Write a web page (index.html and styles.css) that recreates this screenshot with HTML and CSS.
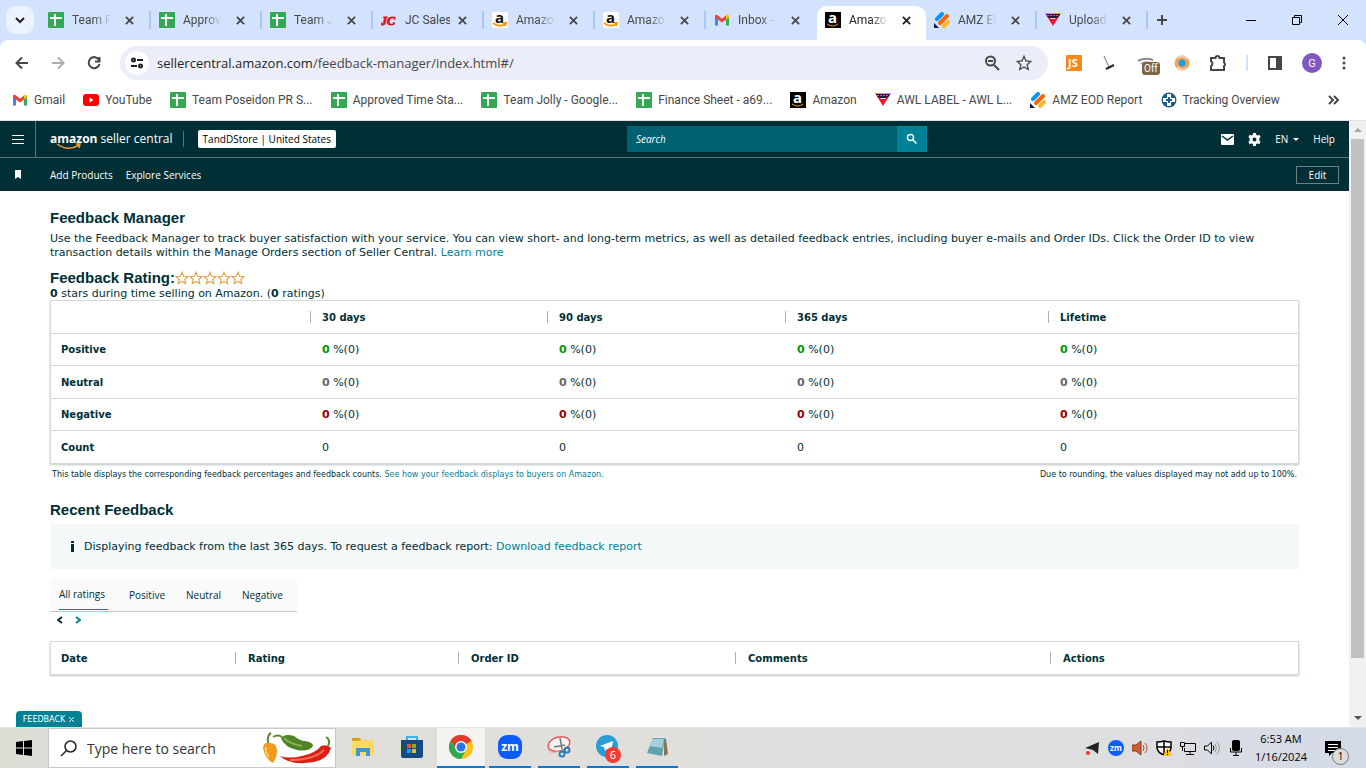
FILE: index.html
```
<!DOCTYPE html>
<html lang="en">
<head>
    <meta charset="UTF-8">
    <meta name="viewport" content="width=device-width, initial-scale=1.0">
    <title>Feedback Manager</title>
    <link rel="stylesheet" href="styles.css">
</head>
<body>

    <!-- shared icons -->
    <svg class="sprite" aria-hidden="true">
        <symbol id="i-sheet" viewBox="0 0 16 16"><rect width="16" height="16" rx="1" fill="#34a853"/><path d="M2 6h12M7 2v12" stroke="#fff" stroke-width="2"/></symbol>
        <symbol id="i-jc" viewBox="0 0 16 16"><text x="0" y="13" font-family="Liberation Serif, serif" font-size="12" font-weight="bold" font-style="italic" fill="#e3141c" stroke="#e3141c">JC</text></symbol>
        <symbol id="i-amz" viewBox="0 0 16 16"><rect width="16" height="16" rx="2" fill="#fff"/><text x="3" y="11" font-family="Open Sans, sans-serif" font-size="15" font-weight="bold" fill="#111">a</text><path d="M1 11q6 5 12 1M11 11h3l-1 3" fill="none" stroke="#ff9900" stroke-width="2"/></symbol>
        <symbol id="i-amzdark" viewBox="0 0 16 16"><rect width="16" height="16" fill="#000"/><text x="3" y="11" font-family="Open Sans, sans-serif" font-size="15" font-weight="bold" fill="#fff">a</text><path d="M2 12q6 4 11 0" fill="none" stroke="#ff9900"/></symbol>
        <symbol id="i-gmail" viewBox="0 0 16 16"><path d="M1 4v9.500h3V7z" fill="#4285f4"/><path d="M15 4v9.500h-3V7z" fill="#34a853"/><path d="M1 3.500Q2 2 4 3.500l4 3.200 4-3.200v4L8 10.500 4 7.500 1 5.200z" fill="#ea4335"/><path d="M12 3.500q2-1.500 3 0v2L12 7.600z" fill="#fbbc04"/></symbol>
        <symbol id="i-youtube" viewBox="0 0 16 16"><rect y="2" width="16" height="12" rx="3" fill="#f00"/><path d="M6.500 5.500v5l4-2.500z" fill="#fff"/></symbol>
        <symbol id="i-awl" viewBox="0 0 16 16"><path d="M0 1h16l-3 5H3z" fill="#2b1238"/><path d="M2 3.500h12" stroke="#e24a9b" stroke-dasharray="2 1"/><path d="M0 1.500h16" stroke="#d7a928"/><path d="M3 6l1-1 2 2h4l2-2 1 1-5 8z" fill="#f0142c"/></symbol>
        <symbol id="i-eod" viewBox="0 0 16 16"><g stroke-linecap="round" stroke-width="4"><path d="M3 7l5-5" stroke="#0099ff"/><path d="M6 11l7-7" stroke="#ff6100"/><path d="M10 14l4-4" stroke="#ffb629"/></g><path d="M0 11l5 5H0z" fill="#0a1551"/></symbol>
        <symbol id="i-track" viewBox="0 0 16 16"><circle cx="8" cy="8" r="7.500" fill="#1d5c85"/><path d="M6 2h4v4h4v4h-4v4H6v-4H2V6h4z" fill="#fff"/><path d="M8 5v6M5 8h6" stroke="#1d5c85" stroke-width="2"/></symbol>
        <symbol id="i-x" viewBox="0 0 10 10"><path d="M1 1l8 8M9 1L1 9" stroke="currentColor" stroke-width="2" fill="none"/></symbol>
        <symbol id="i-star" viewBox="0 0 24 24"><path d="M12 2l3 7 7 .7-5.300 4.800 1.600 7.200L12 17.900l-6.300 3.800 1.600-7.200L2 9.700 9 9z" fill="none" stroke="currentColor" stroke-width="2"/></symbol>
        <symbol id="i-search" viewBox="0 0 16 16"><circle cx="6" cy="6" r="4" fill="none" stroke="currentColor" stroke-width="2"/><path d="M9 9l5 5" stroke="currentColor" stroke-width="2"/></symbol>
    </svg>

    <div class="browser">
        <div class="tab-strip">
            <button class="tab-list" aria-label="Search tabs"><svg width="10" height="10" viewBox="0 0 10 10"><path d="M1 3l4 4 4-4" fill="none" stroke="#1f1f1f" stroke-width="2"/></svg></button>
            <div class="tabs">
                <div class="tab"><svg class="fav"><use href="#i-sheet"/></svg><a href="#">Team Poseidon</a><button aria-label="Close"><svg><use href="#i-x"/></svg></button></div>
                <div class="tab"><svg class="fav"><use href="#i-sheet"/></svg><a href="#">Approved</a><button aria-label="Close"><svg><use href="#i-x"/></svg></button></div>
                <div class="tab"><svg class="fav"><use href="#i-sheet"/></svg><a href="#">Team Jolly</a><button aria-label="Close"><svg><use href="#i-x"/></svg></button></div>
                <div class="tab full"><svg class="fav"><use href="#i-jc"/></svg><a href="#">JC Sales</a><button aria-label="Close"><svg><use href="#i-x"/></svg></button></div>
                <div class="tab"><svg class="fav"><use href="#i-amz"/></svg><a href="#">Amazon</a><button aria-label="Close"><svg><use href="#i-x"/></svg></button></div>
                <div class="tab"><svg class="fav"><use href="#i-amz"/></svg><a href="#">Amazon</a><button aria-label="Close"><svg><use href="#i-x"/></svg></button></div>
                <div class="tab last"><svg class="fav"><use href="#i-gmail"/></svg><a href="#">Inbox -</a><button aria-label="Close"><svg><use href="#i-x"/></svg></button></div>
                <div class="tab active"><svg class="fav"><use href="#i-amzdark"/></svg><a href="#">Amazon</a><button aria-label="Close"><svg><use href="#i-x"/></svg></button></div>
                <div class="tab"><svg class="fav"><use href="#i-eod"/></svg><a href="#">AMZ EOD</a><button aria-label="Close"><svg><use href="#i-x"/></svg></button></div>
                <div class="tab"><svg class="fav"><use href="#i-awl"/></svg><a href="#">Upload</a><button aria-label="Close"><svg><use href="#i-x"/></svg></button></div>
            </div>
            <button class="new-tab" aria-label="New tab"><svg width="12" height="12" viewBox="0 0 12 12"><path d="M6 1v10M1 6h10" stroke="#474747" stroke-width="2"/></svg></button>
            <div class="window-buttons">
                <button aria-label="Minimize"><svg width="12" height="12" viewBox="0 0 12 12"><path d="M1 6.500h10" stroke="#000"/></svg></button>
                <button aria-label="Restore"><svg width="12" height="12" viewBox="0 0 12 12"><path d="M1.500 3.500h7v7h-7zM3.500 3V1.500h7v7H9" fill="none" stroke="#000"/></svg></button>
                <button aria-label="Close window"><svg width="12" height="12" viewBox="0 0 12 12"><path d="M1 1l10 10M11 1L1 11" stroke="#000"/></svg></button>
            </div>
        </div>

        <div class="toolbar">
            <div class="nav-buttons">
                <button aria-label="Back"><svg width="16" height="16" viewBox="0 0 16 16"><path d="M14 8H3M8 2.500L2.500 8 8 13.500" fill="none" stroke="#474747" stroke-width="2"/></svg></button>
                <button aria-label="Forward" disabled><svg width="16" height="16" viewBox="0 0 16 16"><path d="M2 8h11M8 2.500l5.500 5.500L8 13.500" fill="none" stroke="#acacac" stroke-width="2"/></svg></button>
                <button aria-label="Reload"><svg width="16" height="16" viewBox="0 0 16 16"><path d="M13 5a5.500 5.500 0 1 0 .5 4M13.500 2v4.500H9" fill="none" stroke="#474747" stroke-width="2"/></svg></button>
            </div>
            <div class="omnibox">
                <span class="site-info"><svg width="14" height="14" viewBox="0 0 14 14"><g fill="none" stroke="#1f1f1f" stroke-width="2"><circle cx="3.500" cy="4" r="1.500"/><path d="M7 4h6M1 10h6"/><circle cx="10.500" cy="10" r="1.500"/></g></svg></span>
                <a class="url" href="#"><b>sellercentral.amazon.com</b>/feedback-manager/index.html#/</a>
                <button aria-label="Zoom"><svg width="16" height="16" viewBox="0 0 16 16"><path d="M10 10l5 5M4 6h5" stroke="#474747" stroke-width="2"/><circle cx="6.500" cy="6" r="4.500" fill="none" stroke="#474747" stroke-width="2"/></svg></button>
                <button aria-label="Bookmark"><svg class="bookmark-star"><use href="#i-star"/></svg></button>
            </div>
            <div class="extensions">
                <button aria-label="JS"><svg width="16" height="16"><rect width="16" height="16" rx="1" fill="#f7891a"/><text x="2" y="12" font-family="Open Sans, sans-serif" font-size="11" font-weight="bold" fill="#fff">JS</text></svg></button>
                <button aria-label="Mop"><svg width="16" height="16" viewBox="0 0 16 16"><path d="M2 1l5 11" stroke="#777"/><path d="M4 14l8-4" stroke="#222" stroke-width="2"/></svg></button>
                <button class="off" aria-label="Extension off"><svg width="16" height="16" viewBox="0 0 16 16"><path d="M0 6q7-4 15-1" fill="none" stroke="#888" stroke-width="2"/><path d="M3 9q4-3 10-1" fill="none" stroke="#aaa" stroke-width="2"/></svg><span>Off</span></button>
                <button aria-label="Capture"><svg width="16" height="16" viewBox="0 0 16 16"><circle cx="8" cy="8" r="7.500" fill="#f3a15f"/><path d="M3 3q5-4 10 1M13 13q-5 4-10-1" stroke="#f7d2ae" stroke-width="2" fill="none"/><circle cx="8" cy="8" r="3.500" fill="#1b9fd6"/></svg></button>
                <button aria-label="Extensions"><svg width="16" height="18" viewBox="1 0 16 18"><path d="M2 4h4.500a2 2 0 0 1 4 0H15v4.500a2 2 0 0 1 0 3.500v4H2v-4q3-2 0-5z" fill="none" stroke="#474747" stroke-width="2"/></svg></button>
                <i class="divider"></i>
                <button aria-label="Side panel"><svg width="14" height="14" viewBox="0 0 14 14"><path d="M1 1h12v12H1z" fill="none" stroke="#474747" stroke-width="2"/><path d="M8 1h5v12H8z" fill="#474747"/></svg></button>
                <button class="avatar">G</button>
                <button aria-label="Menu"><svg width="4" height="16" viewBox="0 0 4 16" fill="#474747"><circle cx="2" cy="3" r="1.500"/><circle cx="2" cy="8" r="1.500"/><circle cx="2" cy="13" r="1.500"/></svg></button>
            </div>
        </div>

        <div class="bookmarks">
            <a href="#"><svg class="fav"><use href="#i-gmail"/></svg>Gmail</a>
            <a href="#"><svg class="fav"><use href="#i-youtube"/></svg>YouTube</a>
            <a href="#"><svg class="fav"><use href="#i-sheet"/></svg>Team Poseidon PR S...</a>
            <a href="#"><svg class="fav"><use href="#i-sheet"/></svg>Approved Time Sta...</a>
            <a href="#"><svg class="fav"><use href="#i-sheet"/></svg>Team Jolly - Google...</a>
            <a href="#"><svg class="fav"><use href="#i-sheet"/></svg>Finance Sheet - a69...</a>
            <a href="#"><svg class="fav"><use href="#i-amzdark"/></svg>Amazon</a>
            <a href="#"><svg class="fav"><use href="#i-awl"/></svg>AWL LABEL - AWL L...</a>
            <a href="#"><svg class="fav"><use href="#i-eod"/></svg>AMZ EOD Report</a>
            <a href="#"><svg class="fav"><use href="#i-track"/></svg>Tracking Overview</a>
            <button aria-label="More bookmarks"><svg width="12" height="10" viewBox="0 0 12 10"><path d="M1 1l4 4-4 4M6 1l4 4-4 4" fill="none" stroke="#474747" stroke-width="2"/></svg></button>
        </div>
    </div>

    <div class="viewport">
        <div class="page">
            <header>
                <div class="top-bar">
                    <button class="menu" aria-label="Menu"><svg width="12" height="10" viewBox="0 0 12 10"><path d="M0 1.500h12M0 5.500h12M0 9.500h12" stroke="#fff"/></svg></button>
                    <div class="brand">
                        <a class="logo" href="#"><b>amazon</b> seller central
                            <svg width="26" height="8" viewBox="0 0 26 8"><path d="M1 1q11 8 22 1M20 1h4l-1 4" fill="none" stroke="#f19b2c" stroke-width="1.500"/></svg>
                        </a>
                        <button class="store">TandDStore | United States</button>
                    </div>
                    <form class="search">
                        <input type="text" placeholder="Search" aria-label="Search">
                        <button type="button" aria-label="Go"><svg width="12" height="12" viewBox="0 0 16 16"><use href="#i-search"/></svg></button>
                    </form>
                    <div class="account">
                        <a href="#" aria-label="Messages"><svg width="13" height="11" viewBox="0 0 13 11"><rect width="13" height="11" rx="1" fill="#fff"/><path d="M1 2l5.500 4L12 2" fill="none" stroke="#002f36" stroke-width="1.500"/></svg></a>
                        <a href="#" aria-label="Settings"><svg width="13" height="13" viewBox="0 0 13 13"><circle cx="6.500" cy="6.500" r="3.500" fill="none" stroke="#fff" stroke-width="3"/><path d="M6.500 0v2M6.500 11v2M1 3l2 1M10 9l2 1M1 10l2-1M10 4l2-1" stroke="#fff" stroke-width="3"/></svg></a>
                        <button class="lang">EN <i></i></button>
                        <a href="#">Help</a>
                    </div>
                </div>
                <div class="sub-bar">
                    <svg class="pin" width="6" height="9" viewBox="0 0 6 9"><path d="M0 0h6v9L3 7 0 9z" fill="#fff"/></svg>
                    <nav>
                        <a href="#">Add Products</a>
                        <a href="#">Explore Services</a>
                    </nav>
                    <button class="edit">Edit</button>
                </div>
            </header>

            <main>
                <h1>Feedback Manager</h1>
                <p class="intro">Use the Feedback Manager to track buyer satisfaction with your service. You can view short- and long-term metrics, as well as detailed feedback entries, including buyer e-mails and Order IDs. Click the Order ID to view transaction details within the Manage Orders section of Seller Central. <a href="#">Learn more</a></p>

                <h2 class="rating">Feedback Rating:
                    <span class="stars">
                        <svg><use href="#i-star"/></svg><svg><use href="#i-star"/></svg><svg><use href="#i-star"/></svg><svg><use href="#i-star"/></svg><svg><use href="#i-star"/></svg>
                    </span>
                </h2>
                <p class="summary"><b>0</b> stars during time selling on Amazon. (<b>0</b> ratings)</p>

                <table class="metrics">
                    <colgroup><col class="m-label"><col class="m-30"><col class="m-90"><col class="m-365"><col class="m-life"></colgroup>
                    <thead>
                        <tr><td></td><th>30 days</th><th>90 days</th><th>365 days</th><th>Lifetime</th></tr>
                    </thead>
                    <tbody>
                        <tr class="positive"><th>Positive</th><td><b>0</b> %(0)</td><td><b>0</b> %(0)</td><td><b>0</b> %(0)</td><td><b>0</b> %(0)</td></tr>
                        <tr class="neutral"><th>Neutral</th><td><b>0</b> %(0)</td><td><b>0</b> %(0)</td><td><b>0</b> %(0)</td><td><b>0</b> %(0)</td></tr>
                        <tr class="negative"><th>Negative</th><td><b>0</b> %(0)</td><td><b>0</b> %(0)</td><td><b>0</b> %(0)</td><td><b>0</b> %(0)</td></tr>
                        <tr class="count"><th>Count</th><td>0</td><td>0</td><td>0</td><td>0</td></tr>
                    </tbody>
                </table>
                <div class="footnote">
                    <span>This table displays the corresponding feedback percentages and feedback counts. <a href="#">See how your feedback displays to buyers on Amazon.</a></span>
                    <span>Due to rounding, the values displayed may not add up to 100%.</span>
                </div>

                <h2>Recent Feedback</h2>
                <div class="notice">
                    <svg width="5" height="11" viewBox="0 0 5 11"><path d="M1 0h3v2H1zM1 3h3v8H1z" fill="#002f36"/></svg>
                    <span>Displaying feedback from the last 365 days. To request a feedback report: <a href="#">Download feedback report</a></span>
                </div>

                <div class="filters">
                    <button class="selected">All ratings</button>
                    <button>Positive</button>
                    <button>Neutral</button>
                    <button>Negative</button>
                </div>
                <div class="pager">
                    <button aria-label="Previous"><svg width="6" height="8" viewBox="0 0 6 8"><path d="M5 1L1 4l4 3" fill="none" stroke="#002f36" stroke-width="2"/></svg></button>
                    <button aria-label="Next"><svg width="6" height="8" viewBox="0 0 6 8"><path d="M1 1l4 3-4 3" fill="none" stroke="#008296" stroke-width="2"/></svg></button>
                </div>

                <table class="entries">
                    <colgroup><col class="e-date"><col class="e-rating"><col class="e-order"><col class="e-comments"><col class="e-actions"></colgroup>
                    <thead>
                        <tr><th>Date</th><th>Rating</th><th>Order ID</th><th>Comments</th><th>Actions</th></tr>
                    </thead>
                </table>
            </main>
            <button class="feedback-tab">FEEDBACK <svg width="7" height="7" viewBox="0 0 7 7"><path d="M1 1l5 5M6 1L1 6" stroke="#fff"/></svg></button>
        </div>
        <div class="scrollbar">
            <i class="up"></i>
            <div class="track"><div class="thumb"></div></div>
            <i class="down"></i>
        </div>
    </div>

    <div class="taskbar">
        <button class="start" aria-label="Start"><svg width="16" height="16" viewBox="0 0 16 16"><path d="M0 2l7-1v6.500H0zM8 1l8-1v7.500H8zM0 8.500h7V15l-7-1zM8 8.500h8V16l-8-1z"/></svg></button>
        <div class="task-search">
            <svg width="17" height="17" viewBox="0 0 17 17"><circle cx="10.500" cy="6.500" r="5.500" fill="none" stroke="#222" stroke-width="1.500"/><path d="M6.500 10.500L1 16" stroke="#222" stroke-width="1.500"/></svg>
            <input type="text" placeholder="Type here to search" aria-label="Type here to search">
            <svg width="70" height="34" viewBox="0 0 70 34">
                <path d="M6 12Q5 4 9 2" fill="none" stroke="#5e8a2c" stroke-width="2"/>
                <path d="M1 17q1-6 6-5 7-1 8 7 0 8-4 13Q3 28 1 17z" fill="#f39a1d"/><path d="M4 16q-1 6 3 10" stroke="#ffcf68" stroke-width="2" fill="none"/>
                <path d="M11 6q5-3 9 0" fill="none" stroke="#5e8a2c" stroke-width="2"/>
                <path d="M19 7q4-5 13-2 6 5 11 5 8 1 8 5-4 6-16 4Q22 16 19 7z" fill="#4c8426"/><path d="M22 7q6 6 18 8" stroke="#82b14e" stroke-width="2" fill="none"/>
                <path d="M66 15q3-6-2-9" fill="none" stroke="#5e8a2c" stroke-width="2"/>
                <path d="M18 25q9 3 22 0 14-3 19-10 6-2 10 2-3 11-17 14-24 4-34-6z" fill="#db1f14"/><path d="M28 29q24 0 34-10" stroke="#f66b56" stroke-width="2" fill="none"/>
            </svg>
        </div>
        <div class="apps">
            <button aria-label="File Explorer"><svg width="22" height="20" viewBox="0 0 22 20"><path d="M0 1h8l2 3H0z" fill="#d9a013"/><path d="M0 5l10-2h12v15H0z" fill="#ffd766"/><path d="M4 19v-8h14v8h-4v-4H8v4z" fill="#3d96d8"/></svg></button>
            <button aria-label="Microsoft Store"><svg width="24" height="24" viewBox="0 0 24 24"><path d="M7 6V2h10v4" fill="none" stroke="#36b8ec" stroke-width="2"/><path d="M1 5h22v16q0 2-2 2H3q-2 0-2-2z" fill="#174a80"/><path d="M7 9h4v4H7z" fill="#f25022"/><path d="M12 9h4v4h-4z" fill="#7fba00"/><path d="M7 14h4v4H7z" fill="#00a4ef"/><path d="M12 14h4v4h-4z" fill="#ffb900"/></svg></button>
            <button class="open current" aria-label="Google Chrome"><svg width="24" height="24" viewBox="0 0 24 24"><circle cx="12" cy="12" r="12" fill="#fbc116"/><path d="M12 12L1.600 6A12 12 0 0 1 22.400 6z" fill="#e33b2e"/><path d="M12 6h10.400A12 12 0 0 0 1.600 6L7 14z" fill="#e33b2e"/><path d="M1.600 6A12 12 0 0 0 12 24l5-9-5 2-5-3z" fill="#2da94f"/><circle cx="12" cy="12" r="6" fill="#fff"/><circle cx="12" cy="12" r="4.500" fill="#2a75e8"/></svg></button>
            <button class="open"><span class="zoom-app">zm</span></button>
            <button class="open" aria-label="Snipping Tool"><svg width="24" height="24" viewBox="0 0 24 24"><ellipse cx="12" cy="9" rx="11" ry="7" fill="#f3f3f3" stroke="#e45a5a" stroke-width="1.500" transform="rotate(-15 12 9)"/><path d="M1 12q-1 8 12 4" fill="none" stroke="#e69a9a"/><path d="M13 3l2 11M7 12l11-2" stroke="#777" stroke-width="1.500"/><g fill="none" stroke="#287fb8" stroke-width="2"><circle cx="15" cy="19" r="2.500"/><circle cx="20" cy="15" r="2.500"/></g></svg></button>
            <button class="open telegram" aria-label="Telegram"><svg width="24" height="24" viewBox="0 0 24 24"><circle cx="11" cy="11" r="11" fill="#2a9cd6"/><path d="M4 11l13-5-2 11-4-3-2 2-1-4z" fill="#fff"/></svg><span>6</span></button>
            <button class="open" aria-label="Notepad"><svg width="24" height="24" viewBox="0 0 24 24"><path d="M19 3l2 1 2 15-4 2z" fill="#8a7350"/><path d="M8 3h12l-3 18-15-3z" fill="#5fa3b0"/><path d="M8 4h11l-2 9-13-2z" fill="#a3d2da"/><path d="M8 2h12" stroke="#eee" stroke-width="2" stroke-dasharray="1 1"/></svg></button>
        </div>
        <div class="tray">
            <svg width="16" height="16" viewBox="0 0 16 16"><path d="M1 8l14-6-1 12-5-4z" fill="#222"/><circle cx="4" cy="13" r="2" fill="#ef3434"/></svg>
            <span class="zoom-tray">zm</span>
            <svg width="16" height="16" viewBox="0 0 16 16"><path d="M0 5h4l5-4v14l-5-4H0z" fill="#cd5c38" stroke="#8a3a20"/><path d="M11 5q2 3 0 6M13 3q4 5 0 10" fill="none" stroke="#b0523a"/></svg>
            <svg width="16" height="16" viewBox="0 0 16 16"><path d="M8 1q3 1 7 1v6q-1 5-7 7-6-2-7-7V2q4 0 7-1zM8 1v14M1 7h14" fill="#fff" stroke="#000" stroke-width="1.500"/><path d="M11.500 7l4.500 9H7z" fill="#fdc116"/><path d="M11.500 10v3M11.500 14v1" stroke="#000"/></svg>
            <svg width="16" height="16" viewBox="0 0 16 16"><path d="M5 3.500h10.500v8H4.500V8M10 12v3M6 14.500h8M.5 2.500h4v4h-4zM2.500 7v4" fill="none" stroke="#000"/></svg>
            <svg width="16" height="16" viewBox="0 0 16 16"><path d="M.5 6h3l4-4v12l-4-4h-3z" fill="none" stroke="#000"/><path d="M9 5.500q2 2.500 0 5" fill="none" stroke="#000"/><path d="M11 4q3 4 0 8M13 2q5 6 0 12" fill="none" stroke="#999"/></svg>
            <svg width="16" height="16" viewBox="0 0 16 16"><rect x="4" y="0" width="8" height="11" rx="2"/><path d="M2.500 8v4h11V8M8 12v3M5 15.500h6" fill="none" stroke="#000"/></svg>
            <div class="clock">6:53 AM<br>1/16/2024</div>
            <button class="alerts" aria-label="Notifications"><svg width="16" height="15" viewBox="0 0 16 15"><path d="M0 0h16v12H7l-3 3v-3H0z"/><path d="M3 3.500h10M3 6.500h10M3 9.500h7" stroke="#fff"/></svg><span>1</span></button>
        </div>
    </div>

</body>
</html>
```
FILE: styles.css
```
* {
    box-sizing: border-box;
}
body {
    margin: 0;
    height: 100vh;
    display: flex;
    flex-direction: column;
    overflow: hidden;
    background: white;
    color: #002f36;
    font-family: "DejaVu Sans", Verdana, sans-serif;
    font-size: 10px;
}
a {
    color: inherit;
    text-decoration: none;
}
button {
    display: flex;
    align-items: center;
    justify-content: center;
    flex-shrink: 0;
    padding: 0;
    border: none;
    background: none;
    color: inherit;
    font: inherit;
    cursor: pointer;
}
input {
    min-width: 0;
    border: none;
    outline: none;
}
svg {
    display: block;
    flex-shrink: 0;
}
.sprite {
    position: absolute;
    width: 0;
    height: 0;
}
.fav {
    width: 16px;
    height: 16px;
}

/* browser window */
.browser {
    background: #d3e3fd;
    border-bottom: 1px solid #dfe1e5;
    color: #474747;
    font-family: Roboto, "Segoe UI", sans-serif;
    font-size: 12px;
}
.tab-strip {
    display: flex;
    align-items: center;
    height: 40px;
    padding-left: 6px;
}
.tab-list {
    width: 28px;
    height: 28px;
    border-radius: 10px;
    background: #ecf3fe;
}
.tabs {
    display: flex;
    flex: 0 1 1108px;
    min-width: 0;
    height: 34px;
    margin: 6px 0 0 6px;
}
.tab {
    display: flex;
    align-items: center;
    flex: 1;
    min-width: 0;
    height: 28px;
    padding: 0 15px 0 8px;
    border-right: 2px solid #a8c7fa;
    border-image: linear-gradient(transparent 20%, #a8c7fa 20%, #a8c7fa 80%, transparent 80%) 1;
}
.tab a {
    flex: 1;
    margin: 0 14px 0 8px;
    overflow: hidden;
    white-space: nowrap;
    mask-image: linear-gradient(to right, #000 55%, transparent);
}
.tab.full a {
    margin-right: 8px;
    mask-image: none;
}
.tab svg:not(.fav) {
    width: 9px;
    height: 9px;
}
.tab.last {
    border-image: none;
    border-color: transparent;
}
.tab.active {
    height: 34px;
    padding-bottom: 6px;
    border: none;
    border-radius: 10px 10px 0 0;
    background: white;
    color: #1f1f1f;
}
.new-tab {
    width: 28px;
    height: 28px;
}
.window-buttons {
    display: flex;
    margin-left: auto;
}
.window-buttons button {
    width: 46px;
    height: 40px;
}
.toolbar {
    display: flex;
    align-items: center;
    height: 46px;
    padding: 0 20px 0 14px;
    border-radius: 8px 8px 0 0;
    background: white;
}
.nav-buttons {
    display: flex;
    gap: 20px;
    margin-right: 18px;
}
.omnibox {
    display: flex;
    align-items: center;
    flex: 1;
    gap: 16px;
    min-width: 0;
    height: 34px;
    padding: 0 16px 0 5px;
    border-radius: 17px;
    background: #ebeef8;
}
.site-info {
    display: flex;
    align-items: center;
    justify-content: center;
    width: 24px;
    height: 24px;
    border-radius: 50%;
    background: white;
}
.url {
    flex: 1;
    margin-left: -8px;
    overflow: hidden;
    white-space: nowrap;
    font-family: "Open Sans", sans-serif;
    font-size: 13px;
}
.url b {
    color: #1f1f1f;
    font-weight: normal;
}
.bookmark-star {
    width: 16px;
    height: 16px;
}
.extensions {
    display: flex;
    align-items: center;
    gap: 20px;
    margin-left: 18px;
}
.off {
    position: relative;
}
.off span {
    position: absolute;
    top: 7px;
    left: 4px;
    padding: 0 2px;
    border-radius: 3px;
    background: #7d6548;
    color: white;
    font-size: 10px;
    line-height: 13px;
}
.divider {
    width: 2px;
    height: 16px;
    background: #d3e3fd;
}
.avatar {
    width: 20px;
    height: 20px;
    border-radius: 50%;
    background: #7e57c2;
    color: white;
    font-size: 11px;
}
.bookmarks {
    display: flex;
    align-items: center;
    justify-content: space-between;
    height: 34px;
    padding: 0 26px 6px 12px;
    background: white;
}
.bookmarks a {
    display: flex;
    align-items: center;
    gap: 6px;
    white-space: nowrap;
}
.bookmarks button {
    margin-left: 30px;
}

/* seller central */
.viewport {
    display: flex;
    flex: 1;
    min-height: 0;
    border-bottom: 1px solid #e3e3e3;
}
.page {
    position: relative;
    flex: 1;
    min-width: 0;
}
header {
    background: #002f36;
    color: white;
    font-family: "Open Sans", sans-serif;
}
.top-bar {
    display: flex;
    height: 37px;
    border-bottom: 1px solid #5a7478;
}
.menu {
    width: 36px;
    border-right: 1px solid #5a7478;
}
.brand {
    display: flex;
    align-items: center;
    flex: 41;
    padding-left: 14px;
}
.logo {
    position: relative;
    padding-right: 10px;
    border-right: 1px solid #5a7478;
    font-size: 12px;
    line-height: 16px;
    white-space: nowrap;
}
.logo svg {
    position: absolute;
    left: 6px;
    top: 12px;
}
.store {
    height: 18px;
    margin-left: 14px;
    padding: 0 5px;
    border-radius: 2px;
    background: white;
    color: black;
}
.search {
    display: flex;
    align-self: center;
    width: 300px;
    height: 26px;
}
.search input {
    flex: 1;
    padding: 0 9px;
    background: #006170;
    color: white;
    font: italic 10px "Open Sans", sans-serif;
}
.search input::placeholder {
    color: white;
}
.search button {
    width: 30px;
    background: #008296;
}
.account {
    display: flex;
    align-items: center;
    justify-content: flex-end;
    flex: 29;
    gap: 14px;
    padding-right: 14px;
}
.lang {
    gap: 5px;
}
.lang i {
    border: 3px solid transparent;
    border-top-color: white;
    border-bottom: none;
}
.sub-bar {
    display: flex;
    align-items: center;
    height: 33px;
    padding: 0 10px 0 15px;
}
.sub-bar nav {
    display: flex;
    flex: 1;
    gap: 13px;
    margin-left: 29px;
}
.edit {
    width: 43px;
    height: 18px;
    border: 1px solid #6b8286;
}
main {
    padding: 17px 50px 0;
}
h1, h2 {
    margin: 0;
    font-family: "Liberation Sans", Arial, sans-serif;
    font-size: 15px;
    line-height: 20px;
}
p {
    margin: 0;
}
main a {
    color: #008296;
}
.intro {
    margin: 4px 0 8px;
    font-size: 11px;
    line-height: 14px;
}
.rating {
    display: flex;
    align-items: center;
}
.stars {
    display: flex;
    color: #e0a64b;
}
.stars svg {
    width: 14px;
    height: 14px;
}
.summary {
    font-size: 11px;
    line-height: 12px;
}
table {
    width: 100%;
    table-layout: fixed;
    border-collapse: separate;
    border-spacing: 0;
    border: 1px solid #d5dbdb;
    box-shadow: 0 1px 2px #bcc4c4;
}
th, td {
    height: 32px;
    padding: 0 12px;
    border-bottom: 1px solid #d5dbdb;
    text-align: left;
}
td {
    font-size: 11px;
}
.metrics thead > tr > *, .neutral > * {
    height: 33px;
}
.count > *, .entries th {
    border-bottom: none;
}
thead th:not(:first-child) {
    background: linear-gradient(#a9b4b6, #a9b4b6) left center / 1px 12px no-repeat;
}
.m-label { width: 259px; }
.m-30 { width: 237px; }
.m-90 { width: 238px; }
.m-365 { width: 263px; }
.m-life { width: 250px; }
.e-date { width: 184px; }
.e-rating { width: 223px; }
.e-order { width: 277px; }
.e-comments { width: 315px; }
.e-actions { width: 248px; }
.entries th {
    padding-left: 13px;
}
.metrics tr > :first-child, .entries th:first-child {
    padding-left: 10px;
}
.positive b { color: #009900; }
.neutral b { color: #666666; }
.negative b { color: #990000; }
.footnote {
    display: flex;
    justify-content: space-between;
    margin: 5px 2px 19px;
    font-size: 8px;
    line-height: 12px;
}
.notice {
    display: flex;
    align-items: center;
    gap: 9px;
    height: 45px;
    margin: 4px 0 10px;
    padding-left: 20px;
    background: #f4f8f9;
    font-size: 11px;
}
.filters {
    display: inline-flex;
    height: 33px;
    gap: 21px;
    padding: 0 14px 1px 9px;
    border-bottom: 1px solid #c4c8c8;
    background: #fafafa;
    font-family: "Open Sans", sans-serif;
}
.filters .selected {
    padding-right: 3px;
    border-bottom: 1px solid #008296;
}
.pager {
    display: flex;
    gap: 12px;
    margin: 4px 0 17px;
    padding-left: 7px;
}
.feedback-tab {
    position: absolute;
    left: 16px;
    bottom: 0;
    gap: 3px;
    width: 66px;
    height: 16px;
    border-radius: 4px 4px 0 0;
    background: #008296;
    color: white;
    font-size: 8px;
}
.scrollbar {
    display: flex;
    flex-direction: column;
    align-items: center;
    width: 17px;
    background: #f1f1f1;
}
.scrollbar i {
    margin: 7px 0;
    border: 4px solid transparent;
}
.scrollbar .up {
    border-top: none;
    border-bottom-color: #a3a3a3;
}
.scrollbar .down {
    border-bottom: none;
    border-top-color: #505050;
}
.track {
    flex: 1;
    width: 13px;
}
.thumb {
    height: 91%;
    background: #c1c1c1;
}

/* windows taskbar */
.taskbar {
    display: flex;
    flex-shrink: 0;
    height: 40px;
    background: linear-gradient(to right, #deddd6, #e1dfdc 40%, #e0dfdf 80%, #d2dae8);
    color: black;
    font-family: "Open Sans", "Segoe UI", sans-serif;
    font-size: 12px;
}
.start {
    width: 48px;
}
.task-search {
    display: flex;
    align-items: center;
    width: 288px;
    padding: 0 3px 0 11px;
    border: 1px solid #c8c8c8;
    background: white;
}
.task-search input {
    flex: 1;
    padding: 0 0 0 10px;
    color: #333;
    font: 14px "Open Sans", sans-serif;
}
.task-search input::placeholder {
    color: #333;
}
.apps {
    display: flex;
    gap: 1px;
    margin-left: 3px;
}
.apps button {
    width: 48px;
    border-bottom: 2px solid transparent;
}
.apps .open {
    border-bottom-color: #0078d7;
    border-image: linear-gradient(to right, transparent 8%, #0078d7 8%, #0078d7 92%, transparent 92%) 1;
}
.apps .current {
    border-image: none;
    background: #f4f3f2;
}
.zoom-app, .zoom-tray {
    width: 24px;
    border-radius: 9px;
    background: #0b5cff;
    color: white;
    font-size: 12px;
    font-weight: bold;
    line-height: 24px;
    text-align: center;
}
.zoom-tray {
    width: 16px;
    border-radius: 8px;
    font-size: 8px;
    line-height: 16px;
}
.telegram {
    position: relative;
}
.telegram span {
    position: absolute;
    top: 19px;
    left: 21px;
    width: 16px;
    border-radius: 50%;
    background: #f23c34;
    color: white;
    font-size: 11px;
    line-height: 16px;
}
.tray {
    display: flex;
    align-items: center;
    gap: 8px;
    margin-left: auto;
    padding-right: 25px;
}
.clock {
    margin: 0 10px 0 3px;
    font-size: 11px;
    line-height: 18px;
    text-align: center;
}
.alerts {
    position: relative;
}
.alerts span {
    position: absolute;
    top: 7px;
    left: 7px;
    width: 17px;
    border: 1px solid #777;
    border-radius: 50%;
    background: #dcdcdc;
    font-size: 10px;
    line-height: 15px;
}
```
